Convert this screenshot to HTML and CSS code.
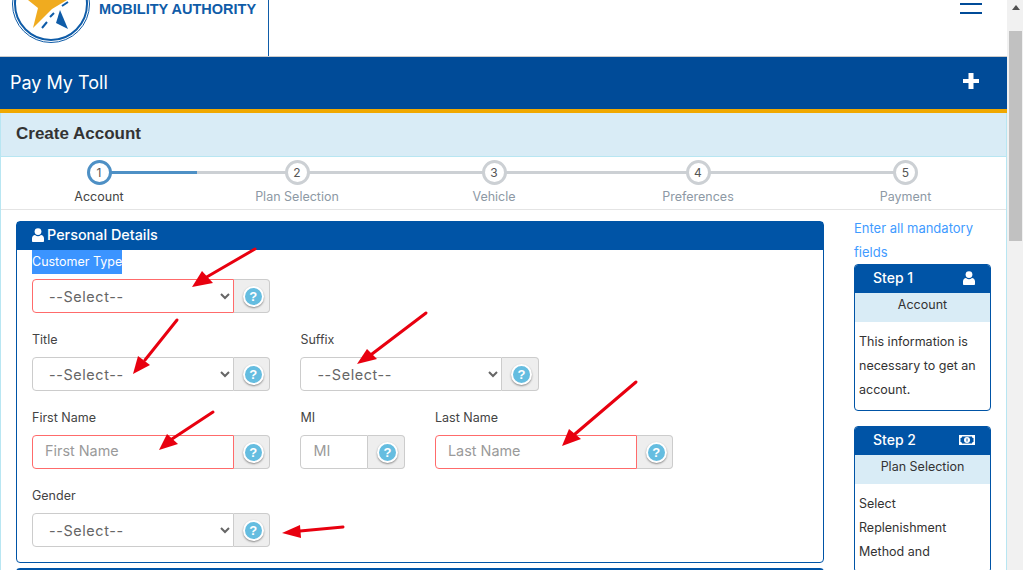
FILE: index.html
```html
<!DOCTYPE html>
<html lang="en">
<head>
    <meta charset="UTF-8">
    <meta name="viewport" content="width=device-width, initial-scale=1.0">
    <title>Pay My Toll - Create Account</title>
    <link rel="stylesheet" href="styles.css">
</head>
<body>
    <div class="page">
        <div class="main">
            <header class="site-header">
                <div class="brand">
                    <svg class="brand-logo" width="80" height="45" viewBox="0 0 80 45">
                        <circle cx="39" cy="4" r="38.5" fill="#fff" stroke="#0f5ca8" stroke-width="1"/>
                        <circle cx="39" cy="4" r="36" fill="#fff" stroke="#0f5ca8" stroke-width="2"/>
                        <polygon points="16,0 26,8 21,28 40,9 55,0" fill="#f0ab1f"/>
                        <polygon points="48,10 56,29 44,23" fill="#0f5ca8"/>
                        <path d="M30 28L35 22M38 17L42 13M50 6L56 2" stroke="#0f5ca8" stroke-width="2" fill="none"/>
                    </svg>
                    <span class="brand-name">MOBILITY AUTHORITY</span>
                </div>
                <div class="menu-toggle"><span></span><span></span></div>
            </header>

            <div class="toll-band">
                <span>Pay My Toll</span>
                <svg class="toll-plus" width="16" height="16" viewBox="0 0 16 16"><path d="M5.500 0h5v6H16v4h-5.500v6h-5v-6H0V6h5.500z" fill="#fff"/></svg>
            </div>

            <h2 class="page-title">Create Account</h2>

            <div class="stepper">
                <div class="step active"><span class="step-num">1</span><span class="step-label">Account</span></div>
                <div class="step"><span class="step-num">2</span><span class="step-label">Plan Selection</span></div>
                <div class="step"><span class="step-num">3</span><span class="step-label">Vehicle</span></div>
                <div class="step"><span class="step-num">4</span><span class="step-label">Preferences</span></div>
                <div class="step"><span class="step-num">5</span><span class="step-label">Payment</span></div>
            </div>

            <div class="content">
                <div class="forms">
                    <section class="panel">
                        <h3 class="panel-head">
                            <svg width="12" height="14" viewBox="0 0 12 14"><circle cx="6" cy="3.600" r="3.400" fill="#fff"/><path d="M0 13v-2.500C0 8.500 1.500 7 3 7c1 .8 2 1.200 3 1.200S8 7.800 9 7c1.500 0 3 1.500 3 3.500V13c0 .6-.5 1-1 1H1c-.5 0-1-.4-1-1z" fill="#fff"/></svg>
                            Personal Details
                        </h3>
                        <div class="panel-body">
                            <div class="row">
                                <div class="field">
                                    <label class="selected-label">Customer Type</label>
                                    <div class="input-group">
                                        <select class="control invalid"><option>--Select--</option></select>
                                        <span class="addon"><i class="help">?</i></span>
                                    </div>
                                </div>
                            </div>
                            <div class="row">
                                <div class="field">
                                    <label>Title</label>
                                    <div class="input-group">
                                        <select class="control"><option>--Select--</option></select>
                                        <span class="addon"><i class="help">?</i></span>
                                    </div>
                                </div>
                                <div class="field">
                                    <label>Suffix</label>
                                    <div class="input-group">
                                        <select class="control"><option>--Select--</option></select>
                                        <span class="addon"><i class="help">?</i></span>
                                    </div>
                                </div>
                            </div>
                            <div class="row">
                                <div class="field">
                                    <label>First Name</label>
                                    <div class="input-group">
                                        <input class="control invalid" placeholder="First Name">
                                        <span class="addon"><i class="help">?</i></span>
                                    </div>
                                </div>
                                <div class="field field-mi">
                                    <label>MI</label>
                                    <div class="input-group">
                                        <input class="control" placeholder="MI">
                                        <span class="addon"><i class="help">?</i></span>
                                    </div>
                                </div>
                                <div class="field">
                                    <label>Last Name</label>
                                    <div class="input-group">
                                        <input class="control invalid" placeholder="Last Name">
                                        <span class="addon"><i class="help">?</i></span>
                                    </div>
                                </div>
                            </div>
                            <div class="row">
                                <div class="field">
                                    <label>Gender</label>
                                    <div class="input-group">
                                        <select class="control"><option>--Select--</option></select>
                                        <span class="addon"><i class="help">?</i></span>
                                    </div>
                                </div>
                            </div>
                        </div>
                    </section>
                    <section class="panel panel-next"></section>
                </div>

                <aside class="sidebar">
                    <p class="hint">Enter all mandatory fields</p>
                    <div class="step-card">
                        <div class="step-card-head">
                            <span>Step 1</span>
                            <svg width="12" height="14" viewBox="0 0 12 14"><circle cx="6" cy="3.600" r="3.400" fill="#fff"/><path d="M0 13v-2.500C0 8.500 1.500 7 3 7c1 .8 2 1.200 3 1.200S8 7.800 9 7c1.500 0 3 1.500 3 3.500V13c0 .6-.5 1-1 1H1c-.5 0-1-.4-1-1z" fill="#fff"/></svg>
                        </div>
                        <div class="step-card-sub">Account</div>
                        <p class="step-card-text">This information is necessary to get an account.</p>
                    </div>
                    <div class="step-card">
                        <div class="step-card-head">
                            <span>Step 2</span>
                            <svg width="16" height="10" viewBox="0 0 16 10"><path fill-rule="evenodd" d="M0 0h16v10H0zM3 1.500C3 2.500 2.300 3 1.500 3v4C2.300 7 3 7.500 3 8.500h10c0-1 .7-1.500 1.500-1.500V3C13.700 3 13 2.500 13 1.500z" fill="#fff"/><circle cx="8" cy="5" r="3" fill="#fff"/><rect x="7.500" y="3.500" width="1" height="3" fill="#0054a6"/></svg>
                        </div>
                        <div class="step-card-sub">Plan Selection</div>
                        <p class="step-card-text">Select<br>Replenishment<br>Method and</p>
                    </div>
                </aside>
            </div>
        </div>

        <div class="scrollbar">
            <span class="scroll-up"></span>
            <span class="scroll-thumb"></span>
        </div>

        <!-- red annotation arrows drawn over the form -->
        <svg class="arrows" width="1023" height="570" viewBox="0 0 1023 570">
            <g fill="#e8000f" stroke="#e8000f" stroke-width="3" stroke-linecap="round">
                <line x1="255" y1="249" x2="205" y2="278"/>
                <polygon points="192,287 202,271 213,283" stroke="none"/>
                <line x1="177" y1="320" x2="145" y2="360"/>
                <polygon points="133,374 138,356 150,365" stroke="none"/>
                <line x1="426" y1="313" x2="372" y2="354"/>
                <polygon points="357,364 367,349 377,359" stroke="none"/>
                <line x1="213" y1="412" x2="172" y2="439"/>
                <polygon points="159,450 167,434 178,444" stroke="none"/>
                <line x1="636" y1="382" x2="575" y2="434"/>
                <polygon points="562,446 569,429 581,439" stroke="none"/>
                <line x1="343" y1="527" x2="300" y2="531"/>
                <polygon points="282,533 300,525 301,538" stroke="none"/>
            </g>
        </svg>
    </div>
</body>
</html>
```

FILE: styles.css
```css
html, body {
    margin: 0;
    height: 570px;
    overflow: hidden;
}
body {
    font-family: Inter, "Noto Sans", sans-serif;
    font-size: 12.500px;
    line-height: 24px;
    color: #333;
    background: #fff;
}
.page {
    position: relative;
    display: flex;
    height: 570px;
}
.main {
    flex: 1;
    min-width: 0;
    overflow: hidden;
}

/* header */
.site-header {
    display: flex;
    justify-content: space-between;
    height: 56px;
    border-bottom: 1px solid #ccc;
}
.brand {
    display: flex;
    align-items: flex-start;
    width: 269px;
    padding-left: 12px;
    box-sizing: border-box;
    border-right: 1px solid #0f5ca8;
}
.brand-logo {
    flex: none;
}
.brand-name {
    margin: 1px 0 0 7px;
    font-family: "Liberation Sans", Arial, sans-serif;
    font-size: 14.500px;
    font-weight: 700;
    line-height: 16px;
    color: #0f5ca8;
    white-space: nowrap;
}
.menu-toggle {
    display: flex;
    flex-direction: column;
    gap: 7px;
    width: 22px;
    margin: 3px 25px 0 0;
}
.menu-toggle span {
    height: 2px;
    background: #004b98;
}
.toll-band {
    display: flex;
    align-items: center;
    justify-content: space-between;
    height: 52px;
    padding: 0 28px 0 10px;
    background: #004b98;
    border-bottom: 4px solid #f0a800;
    color: #fff;
    font-size: 18px;
}
.toll-plus {
    margin-bottom: 4px;
}
.page-title {
    height: 43px;
    margin: 0;
    padding-left: 15px;
    background: #d9ecf6;
    border: 1px solid #b8e6f2;
    border-width: 0 1px 1px;
    font-family: "Liberation Sans", Arial, sans-serif;
    font-size: 17px;
    font-weight: 700;
    line-height: 41px;
    color: #333;
}

/* stepper */
.stepper {
    display: grid;
    grid-template-columns: 196px 200px 194px 214px 1fr;
    height: 53px;
    box-sizing: border-box;
    border: 1px solid #b8e6f2;
    border-width: 0 1px;
    box-shadow: inset 0 -1px 0 #e4e4e4;
}
.step {
    position: relative;
    display: flex;
    flex-direction: column;
    align-items: center;
    padding-top: 3px;
    color: #8d99a5;
}
.step::before {
    content: "";
    position: absolute;
    top: 14px;
    left: 0;
    right: 0;
    height: 3px;
    background: #ccd0d4;
}
.step:first-child::before {
    left: 50%;
    background: #4e90c5;
}
.step:last-child::before {
    right: 50%;
}
.step-num {
    position: relative;
    width: 25px;
    height: 25px;
    box-sizing: border-box;
    border: 3px solid #ccd0d4;
    border-radius: 50%;
    background: #fff;
    font-size: 12px;
    line-height: 19px;
    text-align: center;
    color: #555;
}
.step.active {
    color: #444;
}
.step.active .step-num {
    border-color: #4e90c5;
}

/* content */
.content {
    display: flex;
    gap: 30px;
    height: 360px;
    padding: 6px 0 0 15px;
    border: 1px solid #b8e6f2;
    border-width: 0 1px;
    overflow: hidden;
}
.forms {
    flex: none;
    width: 808px;
    padding-top: 5px;
}
.panel {
    border: 1px solid #0054a6;
    border-radius: 4px;
}
.panel-next {
    height: 40px;
    margin-top: 5px;
    border-top-width: 3px;
}
.panel-head {
    display: flex;
    align-items: center;
    gap: 3px;
    height: 28px;
    box-sizing: border-box;
    margin: 0;
    padding: 0 0 2px 15px;
    background: #0054a6;
    color: #fff;
    font-size: 14.400px;
    font-weight: 500;
}
.panel-body {
    padding: 0 15px;
}
.row {
    display: flex;
    margin-bottom: 15px;
}
.field {
    width: 268.400px;
}
.field-mi {
    width: 134.600px;
}
.field label {
    display: block;
    height: 24px;
    margin-bottom: 5px;
    color: #444;
}
.field .selected-label {
    display: table;
    background: #3b94ff;
    color: #fff;
}
.input-group {
    display: flex;
    height: 34px;
}
.control {
    flex: none;
    width: 202px;
    height: 34px;
    box-sizing: border-box;
    padding: 0 12px;
    border: 1px solid #ccc;
    border-radius: 4px 0 0 4px;
    background: #fff;
    font-family: inherit;
    font-size: 14.400px;
    color: #666;
    outline: none;
}
select.control {
    letter-spacing: .6px;
}
input.control {
    padding-bottom: 3px;
}
.control::placeholder {
    color: #9a9a9a;
}
.field-mi .control {
    width: 68px;
}
.control.invalid {
    border-color: #ff6b6b;
}
.addon {
    display: flex;
    align-items: center;
    justify-content: center;
    width: 36.400px;
    box-sizing: border-box;
    padding-left: 3px;
    background: #eee;
    border: 1px solid #ccc;
    border-left: 0;
    border-radius: 0 4px 4px 0;
}
.help {
    width: 21px;
    height: 21px;
    box-sizing: border-box;
    border: 2px solid #fff;
    border-radius: 50%;
    background: #65bde0;
    box-shadow: 0 1px 2px #888;
    font-family: "Liberation Sans", Arial, sans-serif;
    font-size: 13px;
    font-style: normal;
    font-weight: 700;
    line-height: 17px;
    text-align: center;
    color: #fff;
}

/* sidebar */
.sidebar {
    flex: none;
    width: 137px;
}
.hint {
    margin: 0;
    font-size: 13px;
    color: #3f9bff;
}
.step-card {
    margin-bottom: 15px;
    border: 1px solid #0054a6;
    border-radius: 4px;
    overflow: hidden;
}
.step-card-head {
    display: flex;
    align-items: center;
    justify-content: space-between;
    height: 28px;
    box-sizing: border-box;
    padding: 0 15px 2px 18px;
    background: #0054a6;
    color: #fff;
    font-size: 14px;
    font-weight: 500;
}
.step-card-sub {
    height: 29px;
    background: #d9ecf6;
    line-height: 24px;
    text-align: center;
}
.step-card-text {
    margin: 0;
    padding: 8px 4px;
}

/* fake browser scrollbar */
.scrollbar {
    position: relative;
    flex: none;
    width: 16px;
    background: #f1f1f1;
}
.scroll-up {
    position: absolute;
    top: 5px;
    left: 5px;
    border: 4px solid transparent;
    border-top: 0;
    border-bottom: 5px solid #505050;
}
.scroll-thumb {
    position: absolute;
    top: 31px;
    left: 2px;
    width: 13px;
    height: 210px;
    background: #c1c1c1;
}
.arrows {
    position: absolute;
    top: 0;
    left: 0;
    pointer-events: none;
}
```
